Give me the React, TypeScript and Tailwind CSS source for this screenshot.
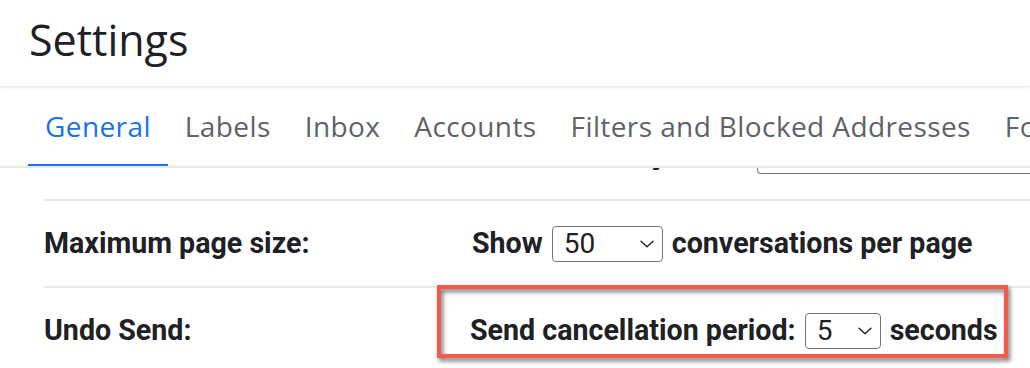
import React from "react";

function Chevron() {
  return (
    <svg width="14" height="8" viewBox="0 0 14 8" fill="none" className="shrink-0">
      <path d="M1 1.2 L7 6.8 L13 1.2" stroke="#202124" strokeWidth="1.4" strokeLinecap="round" strokeLinejoin="round" />
    </svg>
  );
}

function FakeSelect({ value, width }: { value: string; width: string }) {
  return (
    <div
      className={`flex items-center justify-between h-[36px] ${width} border border-[#767676] rounded-[4px] pl-[11px] pr-[8px] bg-white shrink-0`}
    >
      <span className="font-normal text-[28px] leading-none text-[#202124]">{value}</span>
      <Chevron />
    </div>
  );
}

export default function App() {
  const tabs = ["General", "Labels", "Inbox", "Accounts", "Filters and Blocked Addresses", "Forwarding and POP/IMAP"];
  return (
    <div className="w-[1030px] h-[368px] overflow-hidden bg-white flex flex-col" style={{ fontFamily: "Roboto, 'Liberation Sans', sans-serif" }}>
      {/* Header */}
      <div className="relative z-10 h-[86px] shrink-0 bg-white shadow-[0_1px_3px_rgba(0,0,0,0.12)] flex items-center pl-[29px]">
        <h1 className="text-[43px] leading-none text-[#202124] font-normal -mt-[8px]" style={{ fontFamily: "'Open Sans', sans-serif" }}>
          Settings
        </h1>
      </div>
      {/* Tabs */}
      <div className="relative h-[82px] shrink-0 flex pl-[28px] border-b-2 border-[#e8e8e8] whitespace-nowrap overflow-hidden">
        {tabs.map((t, i) => (
          <div key={t} className="relative flex items-center px-[17px] shrink-0">
            <span
              className={`text-[28px] leading-none tracking-[0.4px] ${i === 0 ? "text-[#1a73e8]" : "text-[#5f6368]"}`}
              style={{ fontFamily: "'Open Sans', sans-serif" }}
            >
              {t}
            </span>
            {i === 0 && <div className="absolute left-0 right-0 -bottom-[2px] h-[4px] bg-[#1a73e8]" />}
          </div>
        ))}
      </div>
      {/* Content (scrolled) */}
      <div className="flex-1 overflow-hidden">
        <div className="-mt-[56px] pl-[44px]">
          {/* Row 1 (partially scrolled out) */}
          <div className="h-[87px] flex items-center text-[28.6px] font-bold text-[#202124] whitespace-nowrap">
            <div className="w-[428px] shrink-0" />
            <div className="w-[194px] shrink-0 text-right leading-none overflow-hidden">history</div>
            <div className="ml-[91px] flex-1 h-[36px] border border-[#767676] border-r-0 rounded-l-[4px]" />
          </div>
          {/* Row 2 */}
          <div className="h-[87px] flex items-center border-t-2 border-[#e8e8e8] text-[28.6px] font-bold text-[#202124] whitespace-nowrap">
            <div className="w-[428px] shrink-0 leading-none">Maximum page size:</div>
            <div className="flex items-center gap-[9px] leading-none">
              <span>Show</span>
              <FakeSelect value="50" width="w-[111px]" />
              <span>conversations per page</span>
            </div>
          </div>
          {/* Row 3 */}
          <div className="relative h-[87px] flex items-center border-t-2 border-[#e8e8e8] text-[28.6px] font-bold text-[#202124] whitespace-nowrap">
            <div className="w-[426px] shrink-0 leading-none">Undo Send:</div>
            <div className="flex items-center gap-[9px] leading-none">
              <span>Send cancellation period:</span>
              <FakeSelect value="5" width="w-[76px]" />
              <span>seconds</span>
            </div>
            <div className="absolute left-[393px] top-[-3px] w-[571px] h-[73px] border-4 border-[#f25a4b] drop-shadow-[2px_3px_2px_rgba(0,0,0,0.55)]" />
          </div>
        </div>
      </div>
    </div>
  );
}
